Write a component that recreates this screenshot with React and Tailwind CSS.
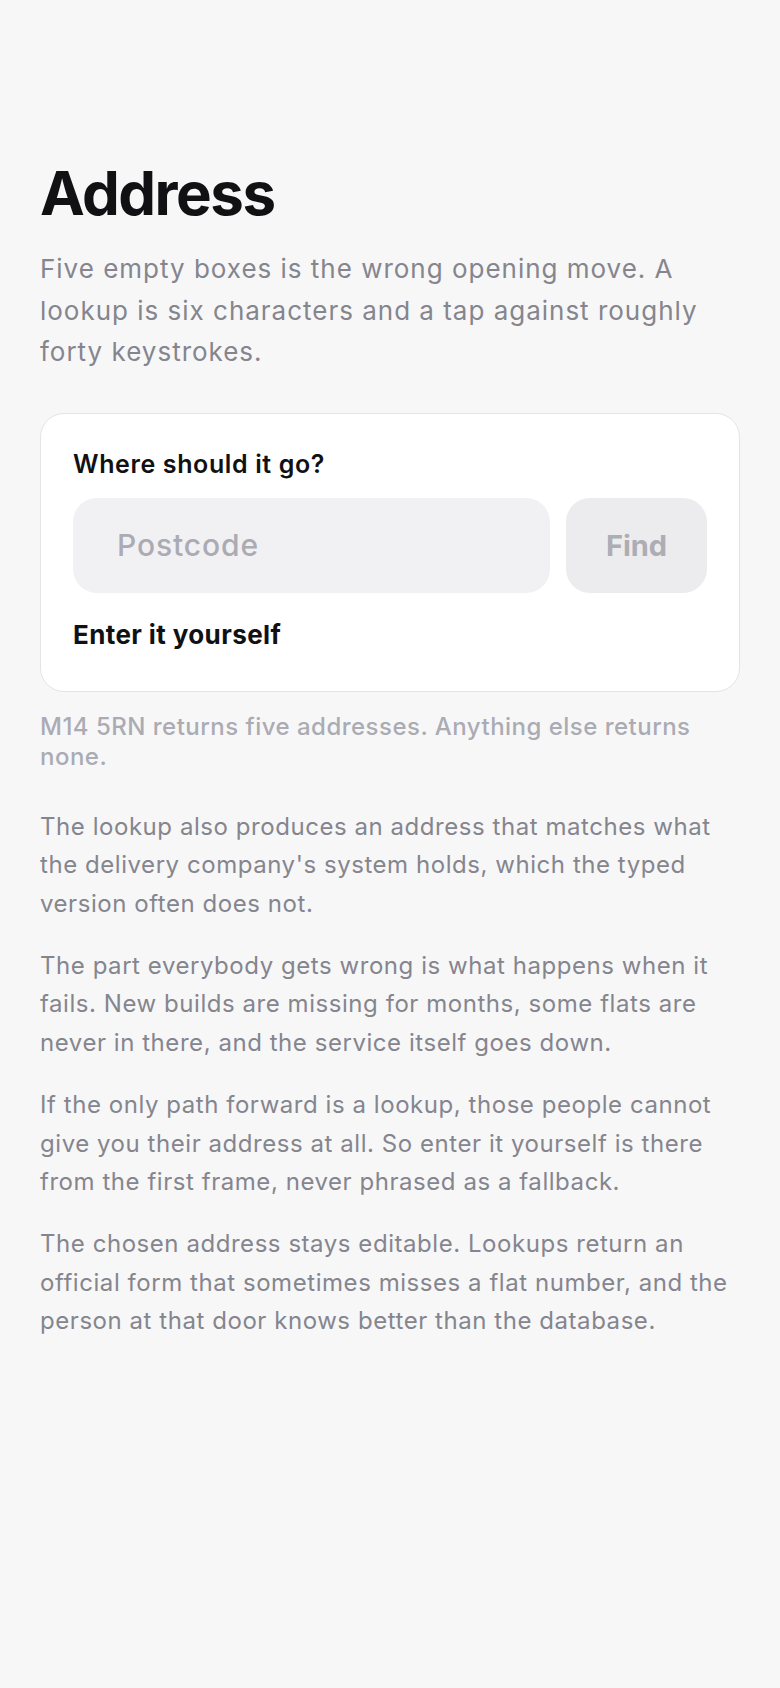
export default function App() {
  return (
    <div className="min-h-[1688px] bg-[#f7f7f8] px-10 pt-40 pb-20" style={{ fontFamily: 'Inter, "Noto Sans", sans-serif' }}>
      <h1 className="text-[60px] leading-[66px] font-bold tracking-[-0.025em] text-[#111113]">Address</h1>
      <p className="mt-[22px] text-[26px] leading-[41.6px] tracking-[0.038em] text-[#85858e]">
        Five empty boxes is the wrong opening move. A lookup is six characters and a tap against roughly forty keystrokes.
      </p>

      <div className="mt-[40px] rounded-[24px] border border-[#e4e4e7] bg-white px-8 pt-8 pb-[30px]">
        <div className="text-[25px] leading-[36px] font-semibold text-[#111113] tracking-[0.025em]">Where should it go?</div>
        <div className="mt-4 flex gap-4">
          <div className="flex h-[95px] flex-1 items-center rounded-[24px] bg-[#f1f1f3] px-11">
            <span className="text-[30px] font-medium tracking-[0.03em] text-[#ababb3]">Postcode</span>
          </div>
          <div className="flex h-[95px] w-[141px] items-center justify-center rounded-[24px] bg-[#ececef]">
            <span className="text-[29px] font-bold text-[#adadb4]">Find</span>
          </div>
        </div>
        <div className="mt-4 py-2 text-[26px] leading-[36px] font-bold text-[#111113] tracking-[0.015em]">Enter it yourself</div>
      </div>

      <p className="mt-5 text-[24px] leading-[30px] font-medium tracking-[0.02em] text-[#ababb3]">
        M14 5RN returns five addresses. Anything else returns none.
      </p>

      <div className="mt-9 flex flex-col gap-6 text-[24px] leading-[38.4px] tracking-[0.023em] text-[#85858e]">
        <p>The lookup also produces an address that matches what the delivery company's system holds, which the typed version often does not.</p>
        <p>The part everybody gets wrong is what happens when it fails. New builds are missing for months, some flats are never in there, and the service itself goes down.</p>
        <p>If the only path forward is a lookup, those people cannot give you their address at all. So enter it yourself is there from the first frame, never phrased as a fallback.</p>
        <p>The chosen address stays editable. Lookups return an official form that sometimes misses a flat number, and the person at that door knows better than the database.</p>
      </div>
    </div>
  );
}
